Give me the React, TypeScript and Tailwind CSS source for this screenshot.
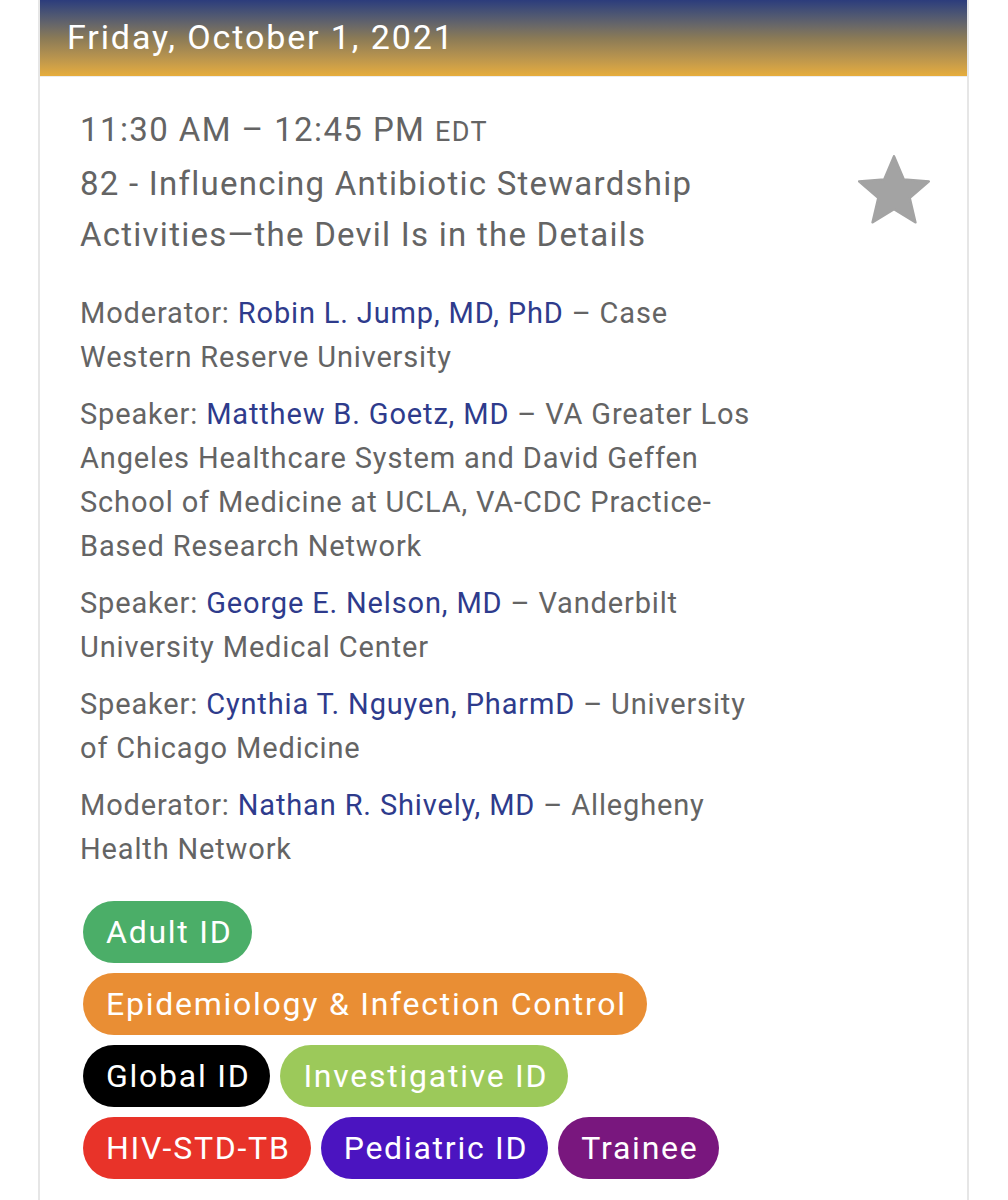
import React from "react";

const font = { fontFamily: "Roboto, 'Noto Sans', sans-serif" };

function Person({ role, name, org }: { role: string; name: string; org: string }) {
  return (
    <p className="m-0">
      {role}: <span className="text-[#2e3b8c]">{name}</span> – {org}
    </p>
  );
}

function Tag({ label, color }: { label: string; color: string }) {
  return (
    <span
      className={`inline-flex h-[62px] items-center rounded-full pl-[23px] pr-[20px] text-[32px] tracking-[1.75px] text-white ${color}`}
    >
      {label}
    </span>
  );
}

export default function App() {
  return (
    <div className="min-h-[1200px] bg-white" style={font}>
      <div className="ml-[38px] w-[931px] min-h-[1200px] border-x-2 border-[#e6e6e6] bg-white">
        <div className="h-[77px] bg-gradient-to-b from-[#2c3c7c] via-[#8a7a56] to-[#e6ad3c] pl-[27px] pt-[12px] border-b border-[#ececec]">
          <div className="text-[34px] leading-[50px] tracking-[1.9px] text-white">Friday, October 1, 2021</div>
        </div>
        <div className="pl-[40px] pr-[36px] pt-[27px]">
          <div className="flex">
            <div className="w-[690px] text-[#646464]">
              <div className="text-[33px] leading-[51px] tracking-[1.4px]">
                11:30 AM – 12:45 PM <span className="text-[27px]">EDT</span>
              </div>
              <div className="text-[33px] leading-[51px] tracking-[1.25px]">
                82 - Influencing Antibiotic Stewardship Activities—the Devil Is in the Details
              </div>
            </div>
            <div className="flex flex-1 justify-end pt-[45px]">
              <svg width="84" height="84" viewBox="0 0 24 24" className="mr-[-5px]">
                <path
                  d="M12 17.27L18.18 21l-1.64-7.03L22 9.24l-7.19-.61L12 2 9.19 8.63 2 9.24l5.46 4.73L5.82 21z"
                  fill="#a3a3a3"
                  stroke="#a3a3a3"
                  strokeWidth="0.6"
                  strokeLinejoin="round"
                />
              </svg>
            </div>
          </div>
          <div className="mt-[31px] flex w-[680px] flex-col gap-[13px] text-[29px] leading-[44px] tracking-[0.85px] text-[#646464]">
            <Person role="Moderator" name="Robin L. Jump, MD, PhD" org="Case Western Reserve University" />
            <Person
              role="Speaker"
              name="Matthew B. Goetz, MD"
              org="VA Greater Los Angeles Healthcare System and David Geffen School of Medicine at UCLA, VA-CDC Practice-Based Research Network"
            />
            <Person role="Speaker" name="George E. Nelson, MD" org="Vanderbilt University Medical Center" />
            <Person role="Speaker" name="Cynthia T. Nguyen, PharmD" org="University of Chicago Medicine" />
            <Person role="Moderator" name="Nathan R. Shively, MD" org="Allegheny Health Network" />
          </div>
          <div className="mt-[30px] ml-[3px] flex flex-col gap-[10px]">
            <div className="flex gap-[10px]">
              <Tag label="Adult ID" color="bg-[#4bae68]" />
            </div>
            <div className="flex gap-[10px]">
              <Tag label="Epidemiology & Infection Control" color="bg-[#e98e34]" />
            </div>
            <div className="flex gap-[10px]">
              <Tag label="Global ID" color="bg-black" />
              <Tag label="Investigative ID" color="bg-[#9cc95a]" />
            </div>
            <div className="flex gap-[10px]">
              <Tag label="HIV-STD-TB" color="bg-[#e83329]" />
              <Tag label="Pediatric ID" color="bg-[#4b14c0]" />
              <Tag label="Trainee" color="bg-[#79177e]" />
            </div>
          </div>
        </div>
      </div>
    </div>
  );
}
